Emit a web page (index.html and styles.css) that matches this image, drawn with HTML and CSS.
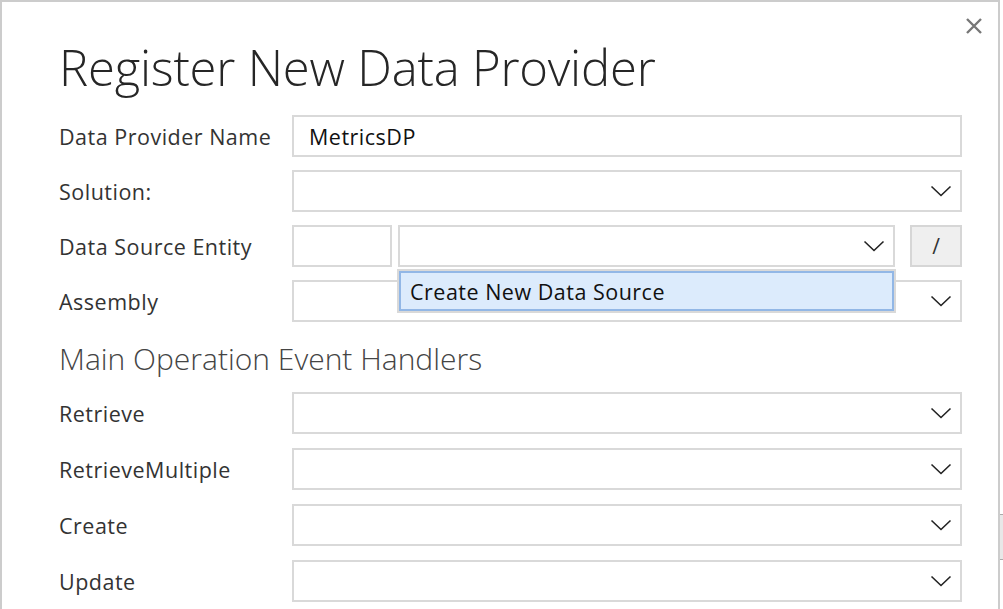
FILE: index.html
```html
<!DOCTYPE html>
<html>
<head>
<meta charset="utf-8">
<link rel="stylesheet" href="styles.css">
</head>
<body>
<div class="dialog">
  <button class="close" aria-label="Close">
    <svg width="18" height="18" viewBox="0 0 18 18"><path d="M2 2 L16 16 M16 2 L2 16" stroke="#777" stroke-width="2.4" fill="none"/></svg>
  </button>
  <h1 class="title">Register New Data Provider</h1>
  <div class="form first">
    <div class="row">
      <label class="label">Data Provider Name</label>
      <div class="field input"><span class="value">MetricsDP</span></div>
    </div>
    <div class="row">
      <label class="label">Solution:</label>
      <div class="field select"><svg class="chev" width="22" height="12" viewBox="0 0 22 12"><polyline points="1.5,1.5 11,10.5 20.5,1.5" fill="none" stroke="#222" stroke-width="1.6"/></svg></div>
    </div>
    <div class="row">
      <label class="label">Data Source Entity</label>
      <div class="combo">
        <div class="field small"></div>
        <div class="selwrap">
          <div class="field select"><svg class="chev" width="22" height="12" viewBox="0 0 22 12"><polyline points="1.5,1.5 11,10.5 20.5,1.5" fill="none" stroke="#222" stroke-width="1.6"/></svg></div>
          <div class="dropdown"><span>Create New Data Source</span></div>
        </div>
        <div class="field btn">/</div>
      </div>
    </div>
    <div class="row">
      <label class="label">Assembly</label>
      <div class="field select"><svg class="chev" width="22" height="12" viewBox="0 0 22 12"><polyline points="1.5,1.5 11,10.5 20.5,1.5" fill="none" stroke="#222" stroke-width="1.6"/></svg></div>
    </div>
  </div>
  <h2 class="section">Main Operation Event Handlers</h2>
  <div class="form second">
    <div class="row">
      <label class="label">Retrieve</label>
      <div class="field select"><svg class="chev" width="22" height="12" viewBox="0 0 22 12"><polyline points="1.5,1.5 11,10.5 20.5,1.5" fill="none" stroke="#222" stroke-width="1.6"/></svg></div>
    </div>
    <div class="row">
      <label class="label">RetrieveMultiple</label>
      <div class="field select"><svg class="chev" width="22" height="12" viewBox="0 0 22 12"><polyline points="1.5,1.5 11,10.5 20.5,1.5" fill="none" stroke="#222" stroke-width="1.6"/></svg></div>
    </div>
    <div class="row">
      <label class="label">Create</label>
      <div class="field select"><svg class="chev" width="22" height="12" viewBox="0 0 22 12"><polyline points="1.5,1.5 11,10.5 20.5,1.5" fill="none" stroke="#222" stroke-width="1.6"/></svg></div>
    </div>
    <div class="row">
      <label class="label">Update</label>
      <div class="field select"><svg class="chev" width="22" height="12" viewBox="0 0 22 12"><polyline points="1.5,1.5 11,10.5 20.5,1.5" fill="none" stroke="#222" stroke-width="1.6"/></svg></div>
    </div>
  </div>
</div>
<div class="bgscroll"></div>
</body>
</html>
```
FILE: styles.css
```css
html, body {
  margin: 0;
  padding: 0;
  background: #ffffff;
  overflow: hidden;
}
body {
  width: 1003px;
  height: 609px;
  position: relative;
  font-family: "Segoe UI", "Open Sans", "Noto Sans", sans-serif;
}
.dialog {
  position: relative;
  height: 607px;
  border: 2px solid #cccccc;
  border-bottom: none;
  background: #fff;
  padding-left: 57px;
  box-sizing: content-box;
  width: 939px;
}
.close {
  position: absolute;
  top: 15px;
  right: 15px;
  border: none;
  background: none;
  padding: 0;
  width: 18px;
  height: 18px;
  display: block;
}
.close svg { display: block; }
.title {
  margin: 0;
  padding-top: 33px;
  height: 80px;
  box-sizing: border-box;
  font-weight: 300;
  font-size: 49px;
  line-height: 64px;
  color: #262626;
  letter-spacing: -0.2px;
}
.form {
  display: flex;
  flex-direction: column;
  width: 903px;
}
.form.first { margin-top: 33px; gap: 13px; }
.form.second { gap: 14px; }
.row {
  display: grid;
  grid-template-columns: 233px 670px;
  align-items: center;
  height: 42px;
  position: relative;
}
.label {
  font-size: 21.5px;
  letter-spacing: 0.5px;
  color: #333333;
  padding-top: 1px;
}
.field {
  height: 42px;
  box-sizing: border-box;
  border: 2px solid #d9d9d9;
  background: #fff;
  display: flex;
  align-items: center;
}
.input .value {
  padding-left: 15px;
  font-size: 21.5px;
  letter-spacing: 0.5px;
  color: #111;
}
.select {
  justify-content: flex-end;
  padding-right: 8px;
}
.chev { display: block; }
.combo {
  display: flex;
  gap: 6px;
  height: 42px;
}
.small { width: 100px; flex: none; }
.selwrap {
  position: relative;
  flex: 1;
  margin-right: 9px;
}
.selwrap .select { width: 100%; }
.btn {
  width: 52px;
  flex: none;
  background: #efefef;
  border-color: #d6d6d6;
  justify-content: center;
  font-size: 21px;
  color: #333;
}
.dropdown {
  position: absolute;
  top: 46px;
  left: 1px;
  width: 495px;
  height: 40px;
  box-sizing: border-box;
  background: #dcebfc;
  border: 2px solid #92b7e6;
  outline: 2px solid #d9d9d9;
  display: flex;
  align-items: center;
  padding-left: 9px;
  font-size: 21.5px;
  letter-spacing: 0.5px;
  color: #111;
  z-index: 2;
}
.section {
  margin: 0;
  height: 70px;
  box-sizing: border-box;
  padding-top: 17px;
  font-weight: 300;
  font-size: 30px;
  line-height: 40px;
  color: #444;
}
.bgscroll {
  position: absolute;
  left: 1000px;
  top: 514px;
  width: 3px;
  height: 44px;
  background: #e8e8e8;
  border-top: 1px solid #aaa;
  border-bottom: 1px solid #aaa;
}
```
